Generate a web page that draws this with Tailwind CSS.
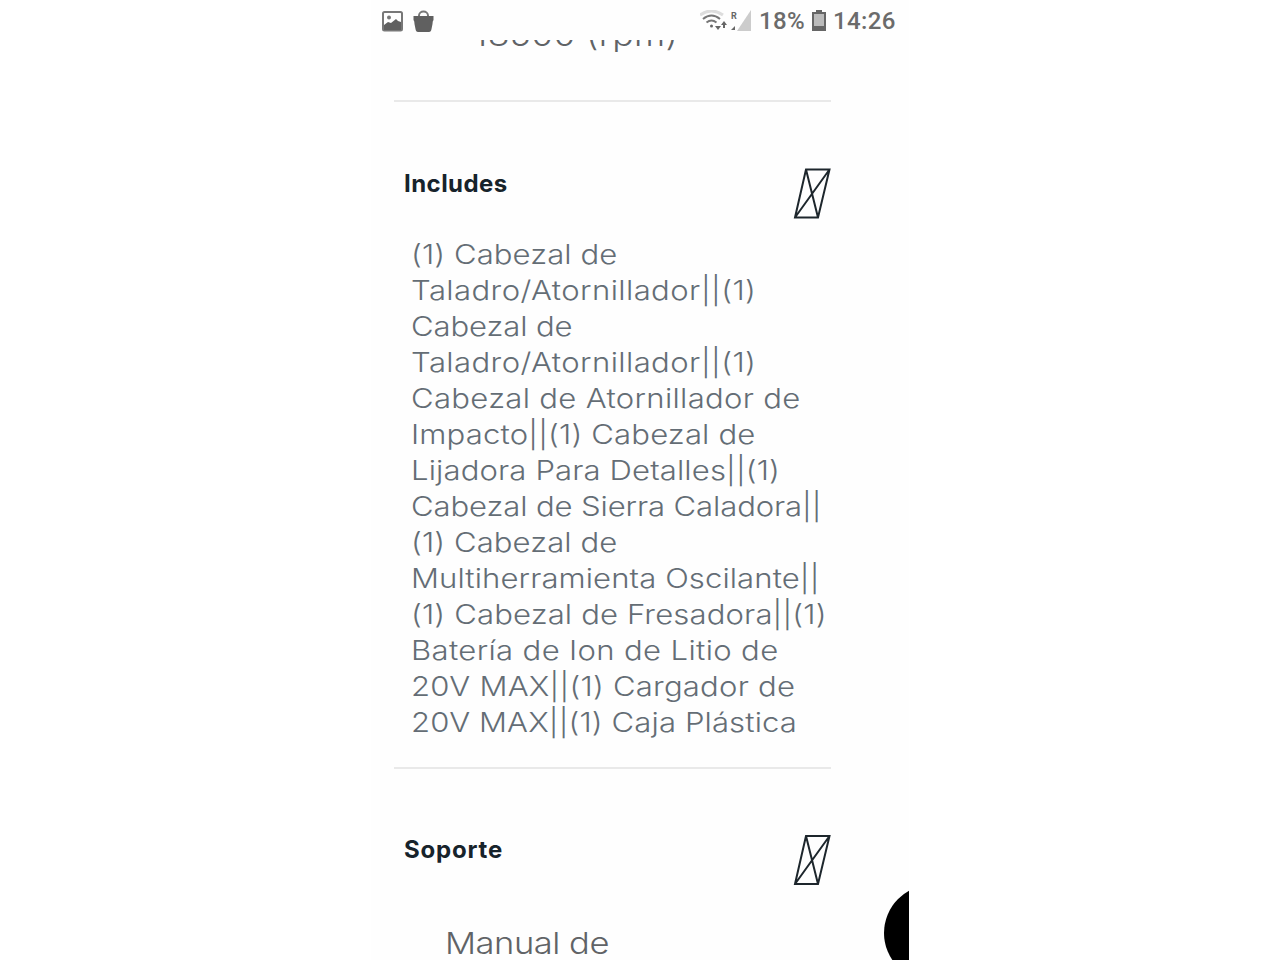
<!DOCTYPE html>
<html lang="es">

<head>
    <meta charset="UTF-8">
    <meta name="viewport" content="width=device-width, initial-scale=1.0">
    <title>Especificaciones</title>
    <script src="https://cdn.jsdelivr.net/npm/@tailwindcss/browser@4"></script>
</head>

<body class="bg-white font-['Inter',sans-serif]">
    <div class="relative mx-auto flex h-[960px] w-[538px] flex-col overflow-hidden bg-[#fefefe]">
        <!-- Status bar -->
        <header class="flex h-10 shrink-0 items-center justify-between pt-0.5 pr-[13px] pl-[11px] font-['Roboto',sans-serif] text-[#6b6b6b]">
            <div class="flex items-center gap-[10px]">
                <svg class="h-[21px] w-[21px]" viewBox="0 0 21 21">
                    <rect x="1" y="1" width="19" height="18.5" rx="1.5" fill="none" stroke="#777" stroke-width="2" />
                    <path d="M2 14l4-3 3 1 5-4 2 2 3 1v8H2z" fill="#606060" />
                    <circle cx="7" cy="6.5" r="2" fill="#777" />
                </svg>
                <svg class="h-[23px] w-[21px]" viewBox="0 0 21 23">
                    <path d="M6 8V5.500a4.500 4 0 0 1 9 0V8" fill="none" stroke="#777" stroke-width="2" />
                    <path d="M.5 6h20v4q-1 1-1 4l-1 5q-.4 3-2.500 3H5q-2.100 0-2.500-3l-1-5q0-3-1-4z" fill="#606060" />
                </svg>
            </div>
            <div class="flex items-center">
                <svg class="h-[22px] w-[53px]" viewBox="0 0 53 22">
                    <g fill="none" stroke-width="2">
                        <path d="M0 5q11.500-8 23 0" stroke="#ddd" stroke-width="3" />
                        <path d="M3 9q8.500-7 17 0" stroke="#777" />
                        <path d="M6.500 12.500q5-4 10 0" stroke="#777" />
                    </g>
                    <circle cx="11.500" cy="16" r="1.500" fill="#666" />
                    <path d="M15 16h6l-3 4zM21 15l3-4 3 4h-2v3h-2v-3z" fill="#666" />
                    <text x="31" y="8.500" font-size="9" font-weight="700" fill="#666">R</text>
                    <path d="M35 16v4h-4z" fill="#666" />
                    <path d="M51 0v21H37z" fill="#ccc" />
                </svg>
                <span class="ml-[6px] w-[47px] text-[24px] leading-6 font-medium tracking-[0.4px] whitespace-nowrap">18%</span>
                <svg class="ml-[6px] h-[22px] w-[14px]" viewBox="0 0 14 22">
                    <path d="M4 0h6v3H4z" fill="#666" />
                    <rect x="1" y="3" width="12" height="17" fill="#bbb" stroke="#666" stroke-width="2" />
                    <path d="M1 16h12v5H1z" fill="#666" />
                </svg>
                <span class="ml-[7px] w-[63px] text-[24px] leading-6 font-medium tracking-[0.4px] whitespace-nowrap">14:26</span>
            </div>
        </header>

        <main class="flex h-[920px] flex-col overflow-hidden pr-[78px] pl-[23px]">
            <p class="-mt-[23px] origin-left scale-x-115 pl-[69px] text-[31px] leading-[36px] font-[350] tracking-[0.25px] whitespace-nowrap text-[#606366]">18500 (rpm)</p>
            <hr class="mt-[47px] h-0.5 shrink-0 border-0 bg-[#e9e9e9]">

            <section>
                <div class="flex h-[135px] items-start justify-between pt-[66px] pl-[10px]">
                    <h2 class="pt-px text-[24px] leading-[30px] font-bold tracking-[0.45px] text-[#17232b]">Includes</h2>
                    <svg class="h-[52px] w-[38px]" viewBox="0 0 38 52">
                        <path d="M13 1.500h23.500L25 49.500H2zL25 49.500M36.500 1.500L2 49.500" fill="none" stroke="#1d262c" stroke-width="2" />
                    </svg>
                </div>
                <div class="ml-[17px] origin-left scale-x-115 text-[27px] leading-[36px] font-[350] whitespace-nowrap text-[#646d75]">
                    <p class="tracking-[0.08px]">(1) Cabezal de</p>
                    <p class="tracking-[0.36px]">Taladro/Atornillador||(1)</p>
                    <p class="tracking-[-0.09px]">Cabezal de</p>
                    <p class="tracking-[0.36px]">Taladro/Atornillador||(1)</p>
                    <p class="tracking-[0.28px]">Cabezal de Atornillador de</p>
                    <p class="tracking-[0.15px]">Impacto||(1) Cabezal de</p>
                    <p class="tracking-[0.12px]">Lijadora Para Detalles||(1)</p>
                    <p class="tracking-[-0.09px]">Cabezal de Sierra Caladora||</p>
                    <p class="tracking-[0.08px]">(1) Cabezal de</p>
                    <p class="tracking-[0.09px]">Multiherramienta Oscilante||</p>
                    <p class="tracking-[0.13px]">(1) Cabezal de Fresadora||(1)</p>
                    <p class="tracking-[0.31px]">Batería de Ion de Litio de</p>
                    <p class="tracking-[0.2px]">20V MAX||(1) Cargador de</p>
                    <p class="tracking-[0.11px]">20V MAX||(1) Caja Plástica</p>
                </div>
            </section>
            <hr class="mt-[26px] h-0.5 shrink-0 border-0 bg-[#e9e9e9]">

            <section>
                <div class="flex h-[134px] items-start justify-between pt-[65px] pl-[10px]">
                    <h2 class="pt-px text-[24px] leading-[30px] font-bold tracking-[0.8px] text-[#17232b]">Soporte</h2>
                    <svg class="h-[52px] w-[38px]" viewBox="0 0 38 52">
                        <path d="M13 2h23.500L25 50H2zL25 50M36.500 2L2 50" fill="none" stroke="#1d262c" stroke-width="2" />
                    </svg>
                </div>
                <p class="ml-[51px] origin-left scale-x-115 pt-[22px] text-[30px] leading-[36px] font-[350] tracking-[-0.4px] text-[#606366]">Manual de</p>
            </section>
        </main>

        <!-- Floating chat button -->
        <div class="absolute top-[885px] left-[513px] h-24 w-24 rounded-full bg-black"></div>
    </div>
</body>

</html>
